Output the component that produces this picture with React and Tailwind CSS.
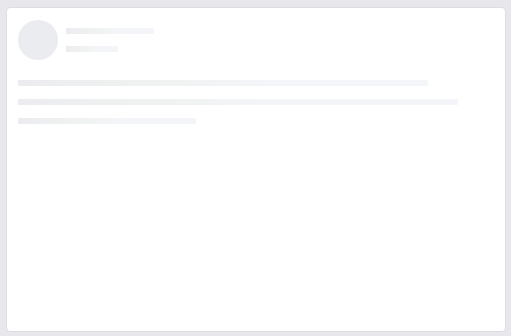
export default function App() {
  return (
    <div className="w-[511px] h-[336px] bg-[#e8e8ec] pl-[6px] pt-[7px]">
      <div className="w-[500px] h-[325px] bg-white border border-[#dcdde2] rounded-[4px] pl-[11px] pt-[12px]">
        <div className="flex items-start">
          <div className="w-[40px] h-[40px] rounded-full bg-[#ebecf0]" />
          <div className="ml-[8px] pt-[8px] flex flex-col gap-[12px]">
            <Bar className="w-[88px]" />
            <Bar className="w-[52px]" />
          </div>
        </div>
        <div className="mt-[20px] flex flex-col gap-[13px]">
          <Bar className="w-[410px]" />
          <Bar className="w-[440px]" />
          <Bar className="w-[178px]" />
        </div>
      </div>
    </div>
  )
}

function Bar({ className }) {
  return (
    <div
      className={
        'h-[6px] rounded-[1px] bg-[linear-gradient(90deg,#ececf0_0%,#eff2f0_30%,#f4f5f9_60%,#f4f5f9_100%)] ' +
        className
      }
    />
  )
}
